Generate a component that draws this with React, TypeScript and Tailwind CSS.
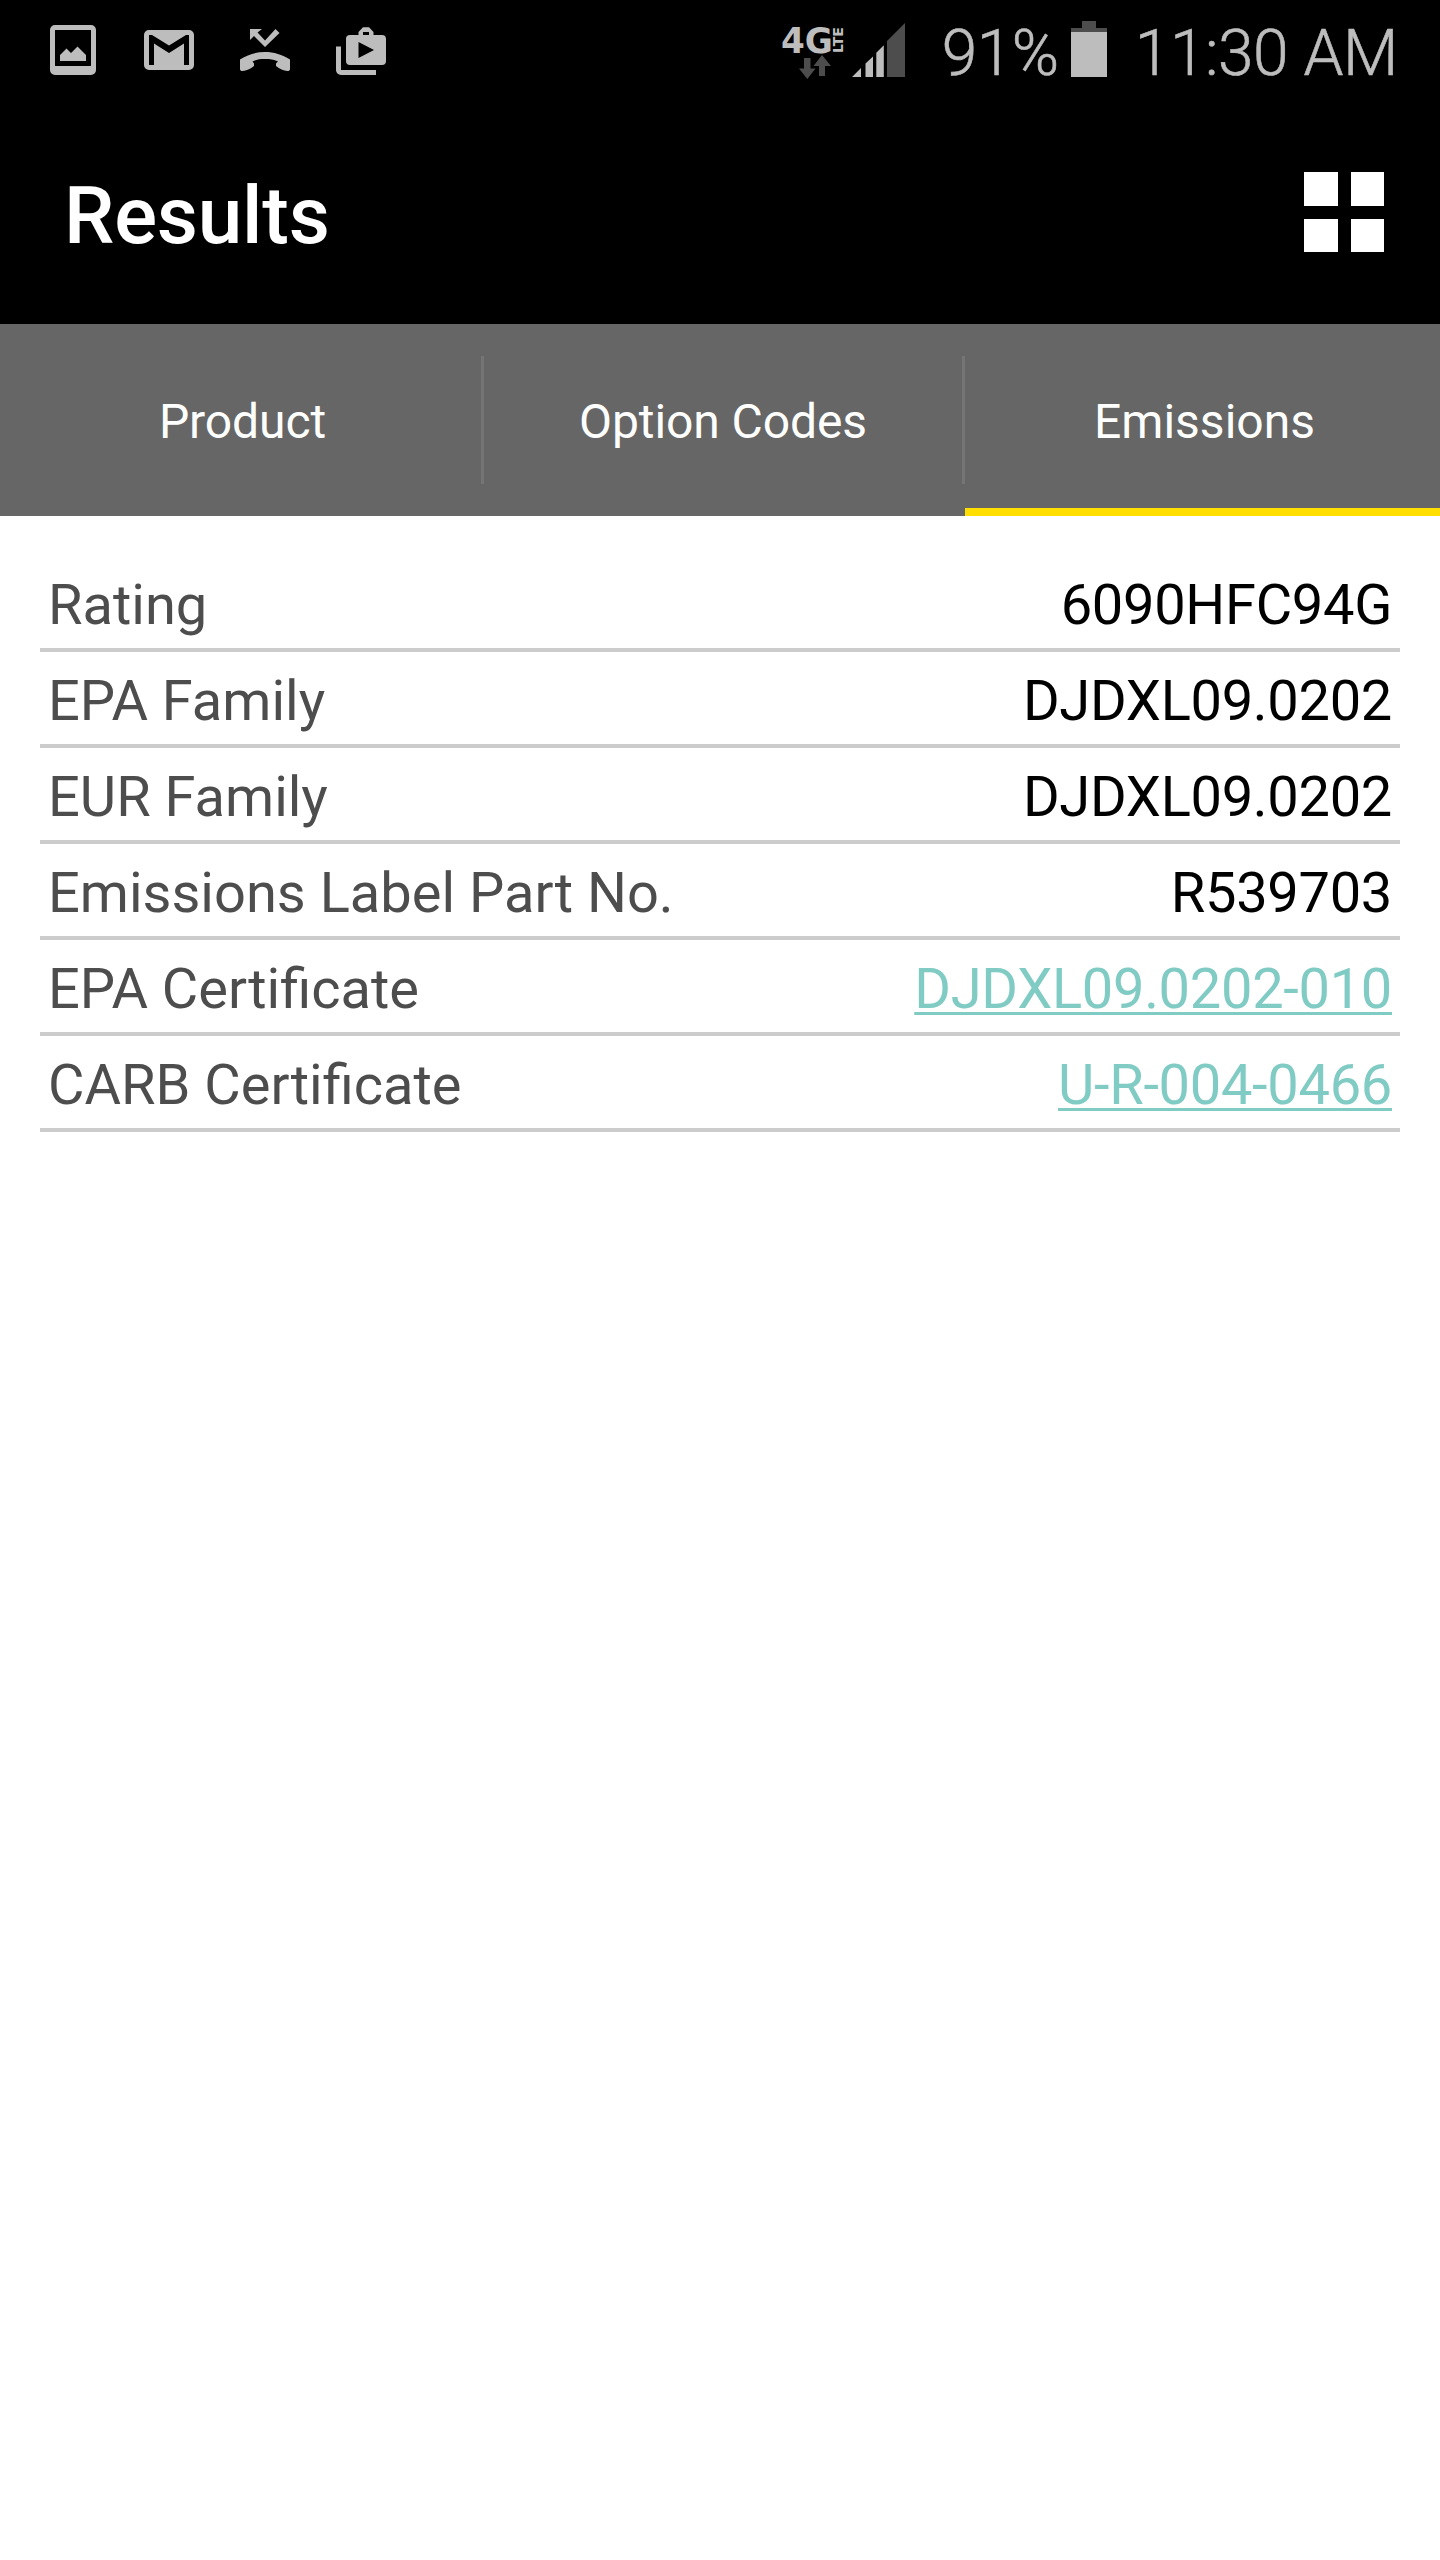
import type { ReactNode } from "react";

const tabs = ["Product", "Option Codes", "Emissions"];

const rows = [
    { label: "Rating", value: "6090HFC94G" },
    { label: "EPA Family", value: "DJDXL09.0202" },
    { label: "EUR Family", value: "DJDXL09.0202" },
    { label: "Emissions Label Part No.", value: "R539703" },
    { label: "EPA Certificate", value: "DJDXL09.0202-010", link: true },
    { label: "CARB Certificate", value: "U-R-004-0466", link: true },
];

function NotificationIcon({ children }: { children: ReactNode }) {
    return (
        <svg viewBox="0 0 50 50" fill="currentColor" className="w-[50px] h-[50px] shrink-0">
            {children}
        </svg>
    );
}

function StatusBar() {
    return (
        <div className="flex items-center justify-between h-[100px] pl-12 pr-[42px] text-[#bdbdbd]">
            <div className="flex items-center gap-[46px]">
                <NotificationIcon>
                    <path fillRule="evenodd" d="M7 0h36a5 5 0 0 1 5 5v40a5 5 0 0 1-5 5H7a5 5 0 0 1-5-5V5a5 5 0 0 1 5-5zM7 5v36h36V5z" />
                    <path d="M12 36v-6l6.5-6.5 4.5 4.5 6.5-6.5 8.5 8.5v6z" />
                </NotificationIcon>
                <NotificationIcon>
                    <path fillRule="evenodd" d="M5 5h40a5 5 0 0 1 5 5v30a5 5 0 0 1-5 5H5a5 5 0 0 1-5-5V10a5 5 0 0 1 5-5zM5 10v30h5V18.500l15 9.500 15-9.500V40h5V10h-3L25 20.500 8 10z" />
                </NotificationIcon>
                <NotificationIcon>
                    <path d="M10 4h12l-4.500 3.500 7.500 8L35.500 4l4 4L25 22 14 11l-4 4z" />
                    <path d="M0 34.500C8 29.500 16 27 25 27s17 2.500 25 7.500V44c0 1.500-1 2-2.500 2-4-.500-8-2-11.500-5v-2c0-1 1-1.500 2-2.500-4-2-8-2.500-13-2.500s-9 .500-12.500 2.500L14 38.500V41c-3.500 3-7.500 4.500-11.500 5C1 46 0 45.500 0 44z" />
                </NotificationIcon>
                <NotificationIcon>
                    <path d="M0 21.500h5V45h35v5H5a5 5 0 0 1-5-5z" />
                    <path fillRule="evenodd" d="M14 10h8.500V7l4.500-4.700h6L37.500 7v3H46a4 4 0 0 1 4 4v22a4 4 0 0 1-4 4H14a4 4 0 0 1-4-4V14a4 4 0 0 1 4-4zM27 7v3h6V7zM22.500 17v16L38 25z" />
                </NotificationIcon>
            </div>

            <div className="flex items-center">
                {/* network type with the data activity arrows below */}
                <svg viewBox="0 0 60 54" className="w-[60px] h-[54px] mt-2 overflow-visible">
                    <g fill="currentColor" fontFamily="'DejaVu Sans', sans-serif" fontWeight="700">
                        <text x="-2" y="26" fontSize="35" textLength="52" lengthAdjust="spacingAndGlyphs">4G</text>
                        <text transform="translate(60 26) rotate(-90)" fontSize="14" textLength="26" lengthAdjust="spacingAndGlyphs">LTE</text>
                    </g>
                    <path fill="#4d4d4d" d="M21 31h6.500v10.500H32.500L24.300 52 16 41.500h5zM36 49h6V39h6L39 28l-8.500 11H36z" />
                </svg>
                <svg viewBox="0 0 53 54" className="w-[53px] h-[54px] ml-[9px]">
                    <path fill="currentColor" d="M0 54l9-9v9zM13.500 40.500l7.500-7V54h-7.500zM24.300 29.700l7.500-7.500V54h-7.500z" />
                    <path fill="#4d4d4d" d="M35 18L53 0v54H35z" />
                </svg>
                <span className="ml-[37px] pt-2 text-[64px] leading-[76px] tracking-[-0.4px] font-light [-webkit-text-stroke:0.6px_#bdbdbd]">91%</span>
                <svg viewBox="0 0 36 56" className="w-9 h-14 mt-[-2px] ml-3">
                    <path fill="#4d4d4d" d="M11 0h14v7h11v4H0V7h11z" />
                    <path fill="currentColor" d="M0 11h36v45H0z" />
                </svg>
                <span className="ml-7 pt-2 text-[64px] leading-[76px] tracking-[-0.4px] font-light [-webkit-text-stroke:0.6px_#bdbdbd]">11:30 AM</span>
            </div>
        </div>
    );
}

export default function App() {
    return (
        <main className="w-[1440px] min-h-[2560px] bg-white font-[Roboto,sans-serif]">
            <header className="h-[324px] bg-black">
                <StatusBar />
                <div className="flex items-center justify-between h-[224px] pl-16 pr-14">
                    <h1 className="pt-2 text-[80px] leading-[94px] tracking-[-0.2px] font-medium text-white">Results</h1>
                    <button className="grid grid-cols-2 gap-[13px] w-20 h-20" aria-label="Menu">
                        <span className="h-full bg-white" />
                        <span className="h-full bg-white" />
                        <span className="h-full bg-white" />
                        <span className="h-full bg-white" />
                    </button>
                </div>
            </header>

            <nav className="grid grid-cols-[481px_3px_478px_3px_475px] h-48 bg-[#666666] text-white text-[48px]">
                <button className="pt-1 pl-1 tracking-[-0.1px]">{tabs[0]}</button>
                <span className="my-8 bg-[#757575]" />
                <button className="pt-1 tracking-[-0.1px]">{tabs[1]}</button>
                <span className="my-8 bg-[#757575]" />
                <button className="pt-3 pl-1 border-b-8 border-[#ffde00]">{tabs[2]}</button>
            </nav>

            <dl className="px-10 pt-10">
                {rows.map((row) => (
                    <div key={row.label} className="flex items-center justify-between h-24 px-2 pt-[6px] border-b-4 border-[#cccccc] text-[56px] leading-[66px]">
                        <dt className="text-[#4d4d4d]">{row.label}</dt>
                        <dd className="text-black tracking-[-0.3px]">
                            {row.link ? (
                                <a href="#" className="text-[#80cbc4] underline decoration-[3px] underline-offset-4 [text-decoration-skip-ink:none]">{row.value}</a>
                            ) : (
                                row.value
                            )}
                        </dd>
                    </div>
                ))}
            </dl>
        </main>
    );
}
